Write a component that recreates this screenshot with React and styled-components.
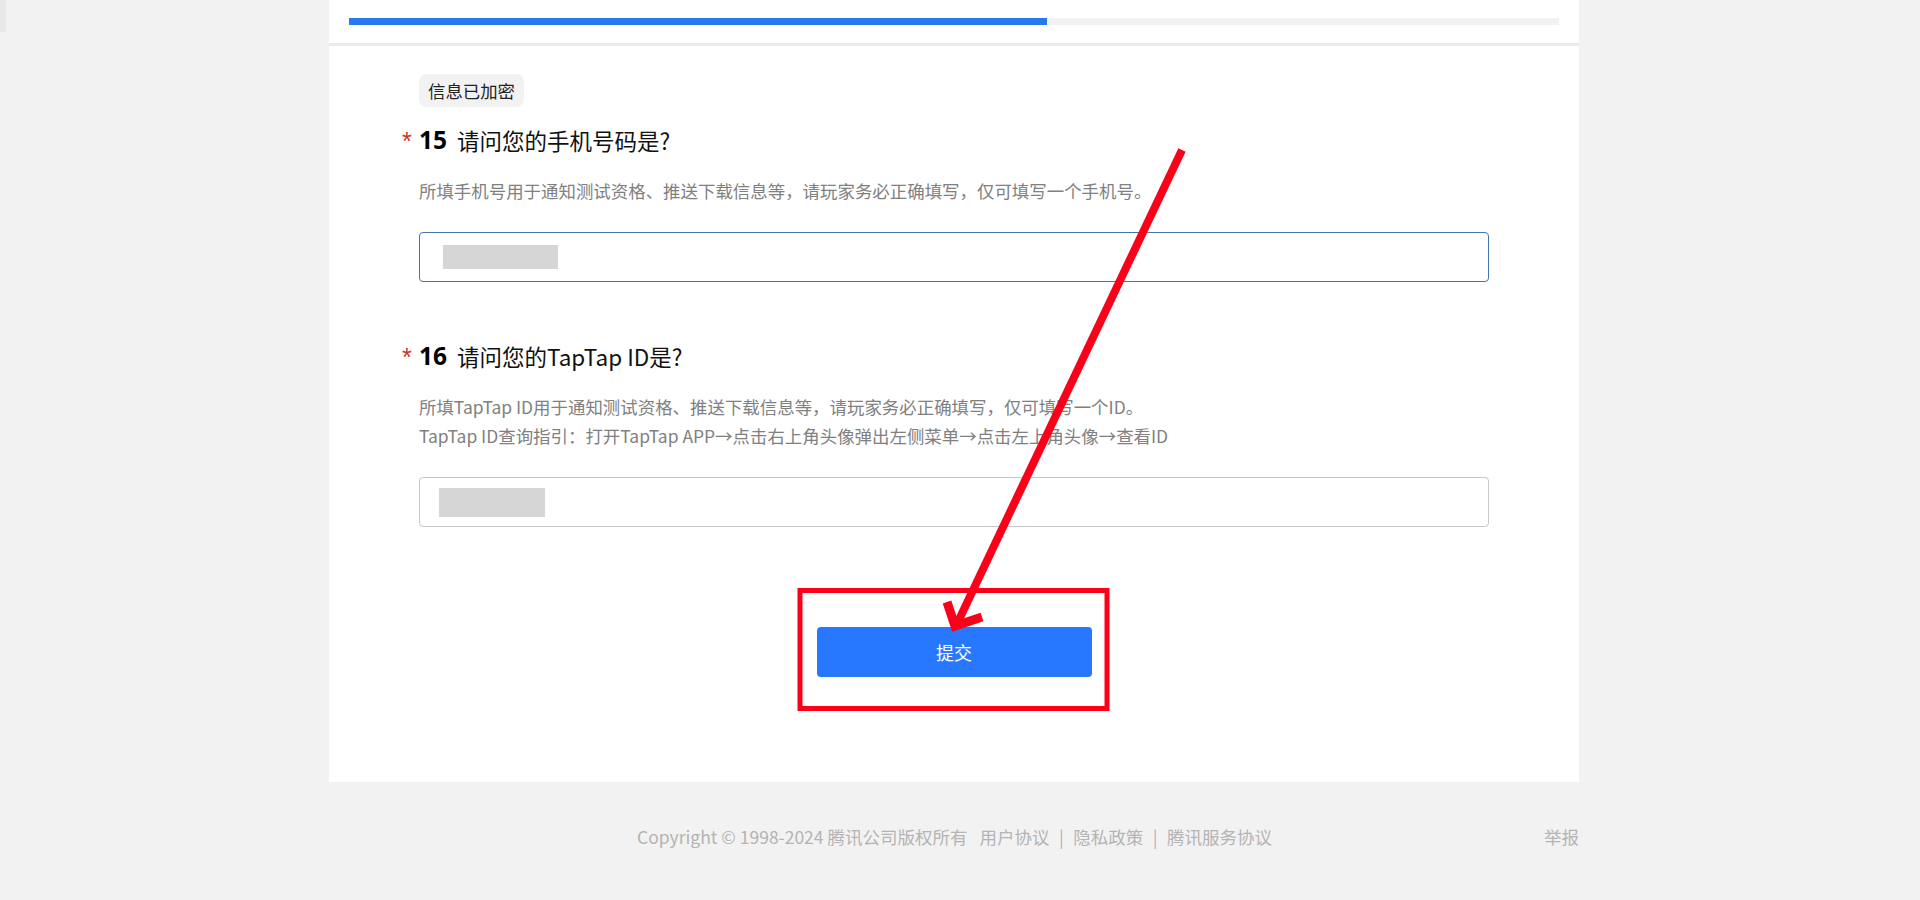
import { createGlobalStyle, styled } from 'styled-components';

const GlobalStyle = createGlobalStyle`
  html, body {
    margin: 0;
    padding: 0;
    background: #f2f2f2;
    overflow: hidden;
  }
  body {
    font-family: "Noto Sans CJK SC", "Noto Sans", sans-serif;
  }
`;

const questions = [
  {
    id: 15,
    title: '请问您的手机号码是?',
    desc: ['所填手机号用于通知测试资格、推送下载信息等，请玩家务必正确填写，仅可填写一个手机号。'],
    focused: true,
    mask: { left: 23, width: 115, height: 24 },
  },
  {
    id: 16,
    title: '请问您的TapTap ID是?',
    desc: [
      '所填TapTap ID用于通知测试资格、推送下载信息等，请玩家务必正确填写，仅可填写一个ID。',
      'TapTap ID查询指引：打开TapTap APP→点击右上角头像弹出左侧菜单→点击左上角头像→查看ID',
    ],
    focused: false,
    mask: { left: 19, width: 106, height: 29 },
  },
];

const App = () => {
  return (
    <Page>
      <GlobalStyle />
      <Tab />
      <Panel>
        <ProgressWrap>
          <ProgressTrack>
            <ProgressFill />
          </ProgressTrack>
        </ProgressWrap>
        <Form>
          <Badge>信息已加密</Badge>
          {questions.map(q => {
            return (
              <Question key={q.id}>
                <Heading>
                  <Star>*</Star>
                  <Num>{q.id}</Num>
                  <span>{q.title}</span>
                </Heading>
                <Desc>
                  {q.desc.map(line => (
                    <div key={line}>{line}</div>
                  ))}
                </Desc>
                <InputBox $focused={q.focused}>
                  <Mask $left={q.mask.left} $width={q.mask.width} $height={q.mask.height} />
                </InputBox>
              </Question>
            );
          })}
          <Actions>
            <Submit>提交</Submit>
          </Actions>
        </Form>
      </Panel>
      <Footer>
        <Copy>
          Copyright © 1998-2024 腾讯公司版权所有
          <Links>
            用户协议<Sep>|</Sep>隐私政策<Sep>|</Sep>腾讯服务协议
          </Links>
        </Copy>
        <Report>举报</Report>
      </Footer>
      <Annotation viewBox="0 0 1920 900">
        <rect x="800" y="590.5" width="307" height="118" fill="none" stroke="#fb0019" strokeWidth="5" />
        <path d="M1182 150 L956 626" fill="none" stroke="#fb0019" strokeWidth="8" />
        <path d="M947 602 L955 626 L982 617" fill="none" stroke="#fb0019" strokeWidth="9" />
      </Annotation>
    </Page>
  );
};
export default App;

const Page = styled.div`
  position: relative;
  width: 1920px;
  height: 900px;
  overflow: hidden;
  background: #f2f2f2;
`;

const Tab = styled.div`
  position: absolute;
  left: 0;
  top: 0;
  width: 6px;
  height: 32px;
  background: #e9e9e9;
`;

const Panel = styled.div`
  width: 1250px;
  height: 782px;
  margin-left: 329px;
  background: #fff;
`;

const ProgressWrap = styled.div`
  height: 25px;
  padding: 18px 20px 0;
  border-bottom: 3px solid #ebebeb;
`;

const ProgressTrack = styled.div`
  height: 7px;
  background: #f2f2f2;
`;

const ProgressFill = styled.div`
  width: 698px;
  height: 100%;
  background: #2878f0;
`;

const Form = styled.div`
  padding: 28px 90px 0 90px;
`;

const Badge = styled.div`
  display: inline-block;
  height: 33px;
  padding: 0 9px;
  border-radius: 8px;
  background: #f2f2f2;
  color: #222;
  font-size: 17.4px;
  line-height: 33px;
`;

const Question = styled.div`
  margin-bottom: 58px;
`;

const Heading = styled.div`
  position: relative;
  display: flex;
  align-items: center;
  height: 32px;
  margin-top: 17px;
  color: #111;
  font-size: 22.5px;
  line-height: 32px;
`;

const Star = styled.span`
  position: absolute;
  left: -17px;
  top: 1px;
  color: #c0392b;
  font-family: "Liberation Sans", sans-serif;
  font-size: 25px;
`;

const Num = styled.span`
  margin-right: 10px;
  color: #000;
  font-family: "Noto Sans", sans-serif;
  font-weight: 700;
  font-size: 24.5px;
`;

const Desc = styled.div`
  margin-top: 20px;
  color: #808080;
  font-size: 17.45px;
  line-height: 29px;
`;

const InputBox = styled.div`
  display: flex;
  align-items: center;
  height: 50px;
  margin-top: 27px;
  border: 1px solid ${props => (props.$focused ? '#3f78b0' : '#c8c8c8')};
  border-radius: 4px;
  box-sizing: border-box;
  background: #fff;
`;

const Mask = styled.div`
  width: ${props => props.$width}px;
  height: ${props => props.$height}px;
  margin-left: ${props => props.$left}px;
  background: #d6d6d6;
`;

const Actions = styled.div`
  display: flex;
  justify-content: center;
  margin-top: 100px;
`;

const Submit = styled.button`
  width: 275px;
  height: 50px;
  border: 0;
  border-radius: 4px;
  background: #2878ff;
  color: #fff;
  font-family: inherit;
  font-size: 18px;
`;

const Footer = styled.div`
  display: flex;
  align-items: center;
  justify-content: space-between;
  width: 1250px;
  height: 108px;
  margin-left: 329px;
  color: #b4b4b4;
  font-size: 17.5px;
`;

const Copy = styled.div`
  margin-left: 308px;
`;

const Links = styled.span`
  margin-left: 12px;
`;

const Sep = styled.span`
  margin: 0 9.5px;
`;

const Report = styled.div``;

const Annotation = styled.svg`
  position: absolute;
  left: 0;
  top: 0;
  width: 1920px;
  height: 900px;
  pointer-events: none;
`;
